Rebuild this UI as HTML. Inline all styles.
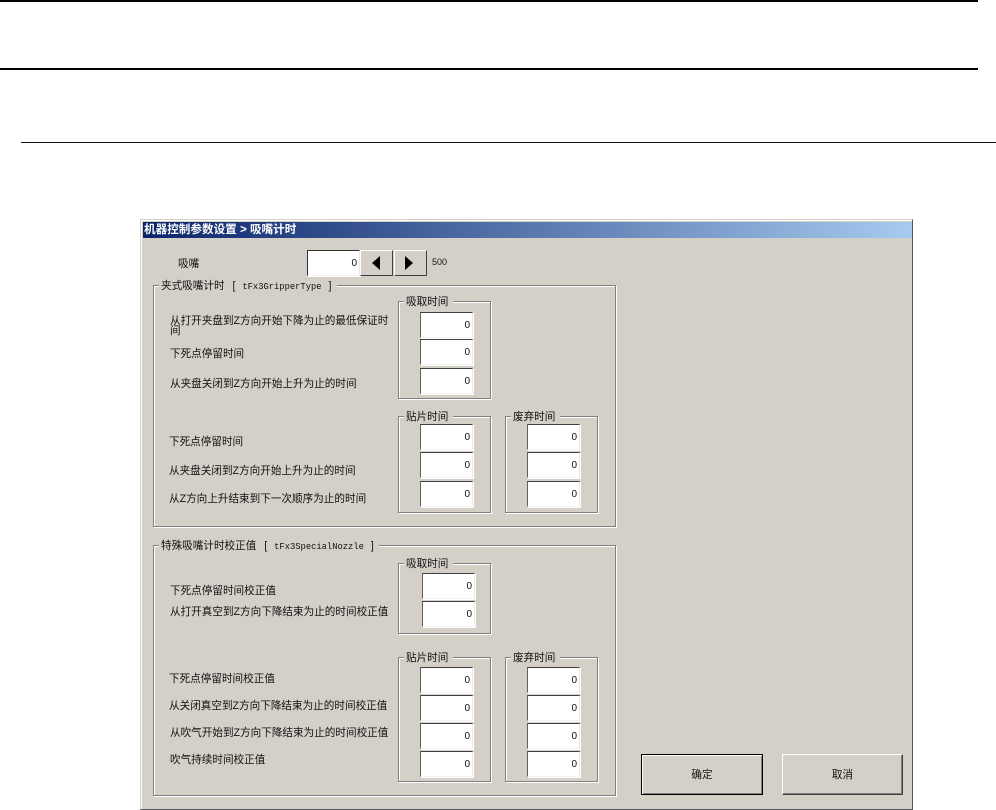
<!DOCTYPE html>
<html><head><meta charset="utf-8">
<style>
html,body{margin:0;padding:0;background:#fff;width:996px;height:810px;overflow:hidden}
body{position:relative;font-family:"Liberation Sans","WenQuanYi Zen Hei","Noto Sans CJK SC",sans-serif;font-size:10.6px;color:#111}
div{position:absolute;box-sizing:border-box}
.l{white-space:nowrap;line-height:12px}
.g{border:1px solid #808080;box-shadow:1px 1px 0 #fff,inset 1px 1px 0 #fff}
.t{background:#d4d0c8;padding:0 5px 0 2px;white-space:nowrap;line-height:12px;top:-6px;left:5px}
.m{font-family:"Liberation Mono",monospace;font-size:8.8px;margin:0 7px 0 4px}
.k{margin-left:2px}
.i{width:53px;height:26px;background:#fff;border-top:1px solid #404040;border-left:1px solid #606060;border-right:1px solid #e8e8e8;border-bottom:1px solid #f4f4f4;text-align:right;padding-right:2px;line-height:25px;font-size:10px;box-shadow:1px 1px 0 #fff}
.b{background:#d4d0c8;border-top:1px solid #fff;border-left:1px solid #fff;border-right:1px solid #404040;border-bottom:1px solid #404040;text-align:center}
</style></head><body>
<div style="left:0;top:0;width:978px;height:2px;background:#000"></div>
<div style="left:0;top:68px;width:978px;height:2px;background:#000"></div>
<div style="left:21px;top:142px;width:975px;height:1px;background:#111"></div>

<div style="left:140px;top:219px;width:773px;height:591px;background:#d4d0c8;border-top:1px solid #d4d0c8;border-left:1px solid #d4d0c8;border-right:1px solid #555;border-bottom:1px solid #555;box-shadow:inset 1px 1px 0 #fff"></div>
<div style="left:143px;top:222px;width:769px;height:16px;background:linear-gradient(90deg,#0a246a,#a6caf0)"></div>
<div class="l" style="left:144px;top:224px;color:#fff;font-weight:bold;font-size:11.6px">机器控制参数设置 &gt; 吸嘴计时</div>

<div class="l" style="left:178px;top:258px">吸嘴</div>
<div class="i" style="left:307px;top:250px;height:26px;border-top:1px solid #333;border-left:1px solid #333">0</div>
<div class="b" style="left:360px;top:250px;width:33px;height:26px"></div>
<div class="b" style="left:394px;top:250px;width:33px;height:26px"></div>
<svg style="position:absolute;left:360px;top:250px" width="68" height="26"><path d="M12 13L20 6V20Z M45 6L53 13L45 20Z" fill="#000"/></svg>
<div class="l" style="left:432px;top:256px;font-size:9px">500</div>

<!-- group 1 -->
<div class="g" style="left:153px;top:285px;width:463px;height:242px"><div class="t" style="left:5px">夹式吸嘴计时&nbsp; <span class="k">[</span>&nbsp;<span class="m">tFx3GripperType</span>]</div></div>
<div class="g" style="left:398px;top:301px;width:93px;height:98px"><div class="t">吸取时间</div></div>
<div class="i" style="left:420px;top:312px">0</div>
<div class="i" style="left:420px;top:339px">0</div>
<div class="i" style="left:420px;top:368px">0</div>
<div class="l" style="left:170px;top:316px;width:225px;white-space:normal;line-height:10px">从打开夹盘到Z方向开始下降为止的最低保证时间</div>
<div class="l" style="left:170px;top:348px">下死点停留时间</div>
<div class="l" style="left:170px;top:378px">从夹盘关闭到Z方向开始上升为止的时间</div>

<div class="g" style="left:398px;top:416px;width:93px;height:97px"><div class="t">贴片时间</div></div>
<div class="g" style="left:505px;top:416px;width:93px;height:97px"><div class="t">废弃时间</div></div>
<div class="i" style="left:420px;top:424px">0</div>
<div class="i" style="left:420px;top:452px">0</div>
<div class="i" style="left:420px;top:481px">0</div>
<div class="i" style="left:527px;top:424px">0</div>
<div class="i" style="left:527px;top:452px">0</div>
<div class="i" style="left:527px;top:481px">0</div>
<div class="l" style="left:169px;top:436px">下死点停留时间</div>
<div class="l" style="left:169px;top:465px">从夹盘关闭到Z方向开始上升为止的时间</div>
<div class="l" style="left:169px;top:493px">从Z方向上升结束到下一次顺序为止的时间</div>

<!-- group 2 -->
<div class="g" style="left:153px;top:545px;width:463px;height:251px"><div class="t" style="left:5px">特殊吸嘴计时校正值&nbsp; <span class="k">[</span>&nbsp;<span class="m">tFx3SpecialNozzle</span>]</div></div>
<div class="g" style="left:398px;top:563px;width:93px;height:71px"><div class="t">吸取时间</div></div>
<div class="i" style="left:422px;top:573px">0</div>
<div class="i" style="left:422px;top:601px">0</div>
<div class="l" style="left:170px;top:585px">下死点停留时间校正值</div>
<div class="l" style="left:170px;top:606px">从打开真空到Z方向下降结束为止的时间校正值</div>

<div class="g" style="left:398px;top:657px;width:93px;height:125px"><div class="t">贴片时间</div></div>
<div class="g" style="left:505px;top:657px;width:93px;height:125px"><div class="t">废弃时间</div></div>
<div class="i" style="left:420px;top:667px">0</div>
<div class="i" style="left:420px;top:695px">0</div>
<div class="i" style="left:420px;top:723px">0</div>
<div class="i" style="left:420px;top:751px">0</div>
<div class="i" style="left:527px;top:667px">0</div>
<div class="i" style="left:527px;top:695px">0</div>
<div class="i" style="left:527px;top:723px">0</div>
<div class="i" style="left:527px;top:751px">0</div>
<div class="l" style="left:169px;top:673px">下死点停留时间校正值</div>
<div class="l" style="left:169px;top:700px">从关闭真空到Z方向下降结束为止的时间校正值</div>
<div class="l" style="left:170px;top:727px">从吹气开始到Z方向下降结束为止的时间校正值</div>
<div class="l" style="left:170px;top:754px">吹气持续时间校正值</div>

<div class="b" style="left:641px;top:754px;width:122px;height:41px;border:1px solid #000;box-shadow:inset 1px 1px 0 #fff,inset -1px -1px 0 #808080;line-height:40px">确定</div>
<div class="b" style="left:782px;top:754px;width:121px;height:41px;border-right:1px solid #404040;border-bottom:1px solid #404040;box-shadow:inset -1px -1px 0 #808080;line-height:40px">取消</div>
</body></html>
